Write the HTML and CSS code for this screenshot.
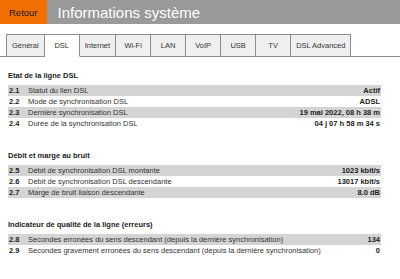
FILE: index.html
```html
<!DOCTYPE html>
<html>
<head>
    <title>Informations système</title>
    <link rel="stylesheet" href="styles.css">
</head>
<body>
    <div class="header">
        <a class="back-button" href="#">Retour</a>
        <h1 class="page-title">Informations système</h1>
    </div>

    <ul class="tabs">
        <li class="tab">Général</li>
        <li class="tab active">DSL</li>
        <li class="tab">Internet</li>
        <li class="tab">Wi-Fi</li>
        <li class="tab">LAN</li>
        <li class="tab">VoIP</li>
        <li class="tab">USB</li>
        <li class="tab">TV</li>
        <li class="tab">DSL Advanced</li>
    </ul>

    <div class="content">
        <div class="section">
            <h2 class="section-title">Etat de la ligne DSL</h2>
            <table class="info-table">
                <tr><td class="num">2.1</td><td class="label">Statut du lien DSL</td><td class="value">Actif</td></tr>
                <tr><td class="num">2.2</td><td class="label">Mode de synchronisation DSL</td><td class="value">ADSL</td></tr>
                <tr><td class="num">2.3</td><td class="label">Dernière synchronisation DSL</td><td class="value">19 mai 2022, 08 h 38 m</td></tr>
                <tr><td class="num">2.4</td><td class="label">Durée de la synchronisation DSL</td><td class="value">04 j 07 h 58 m 34 s</td></tr>
            </table>
        </div>

        <div class="section">
            <h2 class="section-title">Débit et marge au bruit</h2>
            <table class="info-table">
                <tr><td class="num">2.5</td><td class="label">Débit de synchronisation DSL montante</td><td class="value">1023 kbit/s</td></tr>
                <tr><td class="num">2.6</td><td class="label">Débit de synchronisation DSL descendante</td><td class="value">13017 kbit/s</td></tr>
                <tr><td class="num">2.7</td><td class="label">Marge de bruit liaison descendante</td><td class="value">8.0 dB</td></tr>
            </table>
        </div>

        <div class="section">
            <h2 class="section-title">Indicateur de qualité de la ligne (erreurs)</h2>
            <table class="info-table">
                <tr><td class="num">2.8</td><td class="label">Secondes erronées du sens descendant (depuis la dernière synchronisation)</td><td class="value">134</td></tr>
                <tr><td class="num">2.9</td><td class="label">Secondes gravement erronées du sens descendant (depuis la dernière synchronisation)</td><td class="value">0</td></tr>
            </table>
        </div>
    </div>
</body>
</html>
```

FILE: styles.css
```css
body {
    margin: 0;
    font-family: "Liberation Sans", Arial, sans-serif;
    background-color: #ffffff;
    color: #222222;
}
.header {
    display: flex;
    align-items: center;
    height: 24px;
    background-color: #999999;
}
.back-button {
    display: flex;
    align-items: center;
    height: 100%;
    padding: 0 9px;
    background-color: #f16e00;
    color: #1a1a1a;
    font-size: 9.5px;
    text-decoration: none;
}
.page-title {
    margin: 0 0 0 11px;
    font-size: 15px;
    font-weight: normal;
    color: #ffffff;
}
.tabs {
    display: flex;
    margin: 10px 0 0 0;
    padding: 0 0 0 6px;
    list-style: none;
    border-bottom: 1px solid #8c8c8c;
}
.tab {
    box-sizing: border-box;
    min-width: 35px;
    height: 23px;
    padding: 0 5px;
    margin-bottom: -1px;
    display: flex;
    align-items: center;
    justify-content: center;
    font-size: 7.5px;
    color: #333333;
    background-color: #efefef;
    border: 1px solid #8c8c8c;
    border-left: none;
}
.tab:first-child {
    border-left: 1px solid #8c8c8c;
}
.tab.active {
    background-color: #ffffff;
    border-bottom-color: #ffffff;
}
.content {
    padding: 14px 19px 0 8px;
}
.section {
    margin-bottom: 22px;
}
.section-title {
    margin: 0 0 4px 0;
    font-size: 7.5px;
    line-height: 10px;
    font-weight: bold;
    color: #222222;
}
.info-table {
    width: 100%;
    border-collapse: collapse;
    font-size: 7.5px;
}
.info-table td {
    height: 11px;
    padding: 0;
    line-height: 11px;
}
.info-table tr:nth-child(odd) {
    background-color: #d4d4d4;
}
.info-table .num {
    width: 19px;
    padding-left: 1px;
    font-weight: bold;
}
.info-table .label {
    color: #333333;
}
.info-table .value {
    text-align: right;
    font-weight: bold;
    padding-right: 1px;
    white-space: nowrap;
}
```
